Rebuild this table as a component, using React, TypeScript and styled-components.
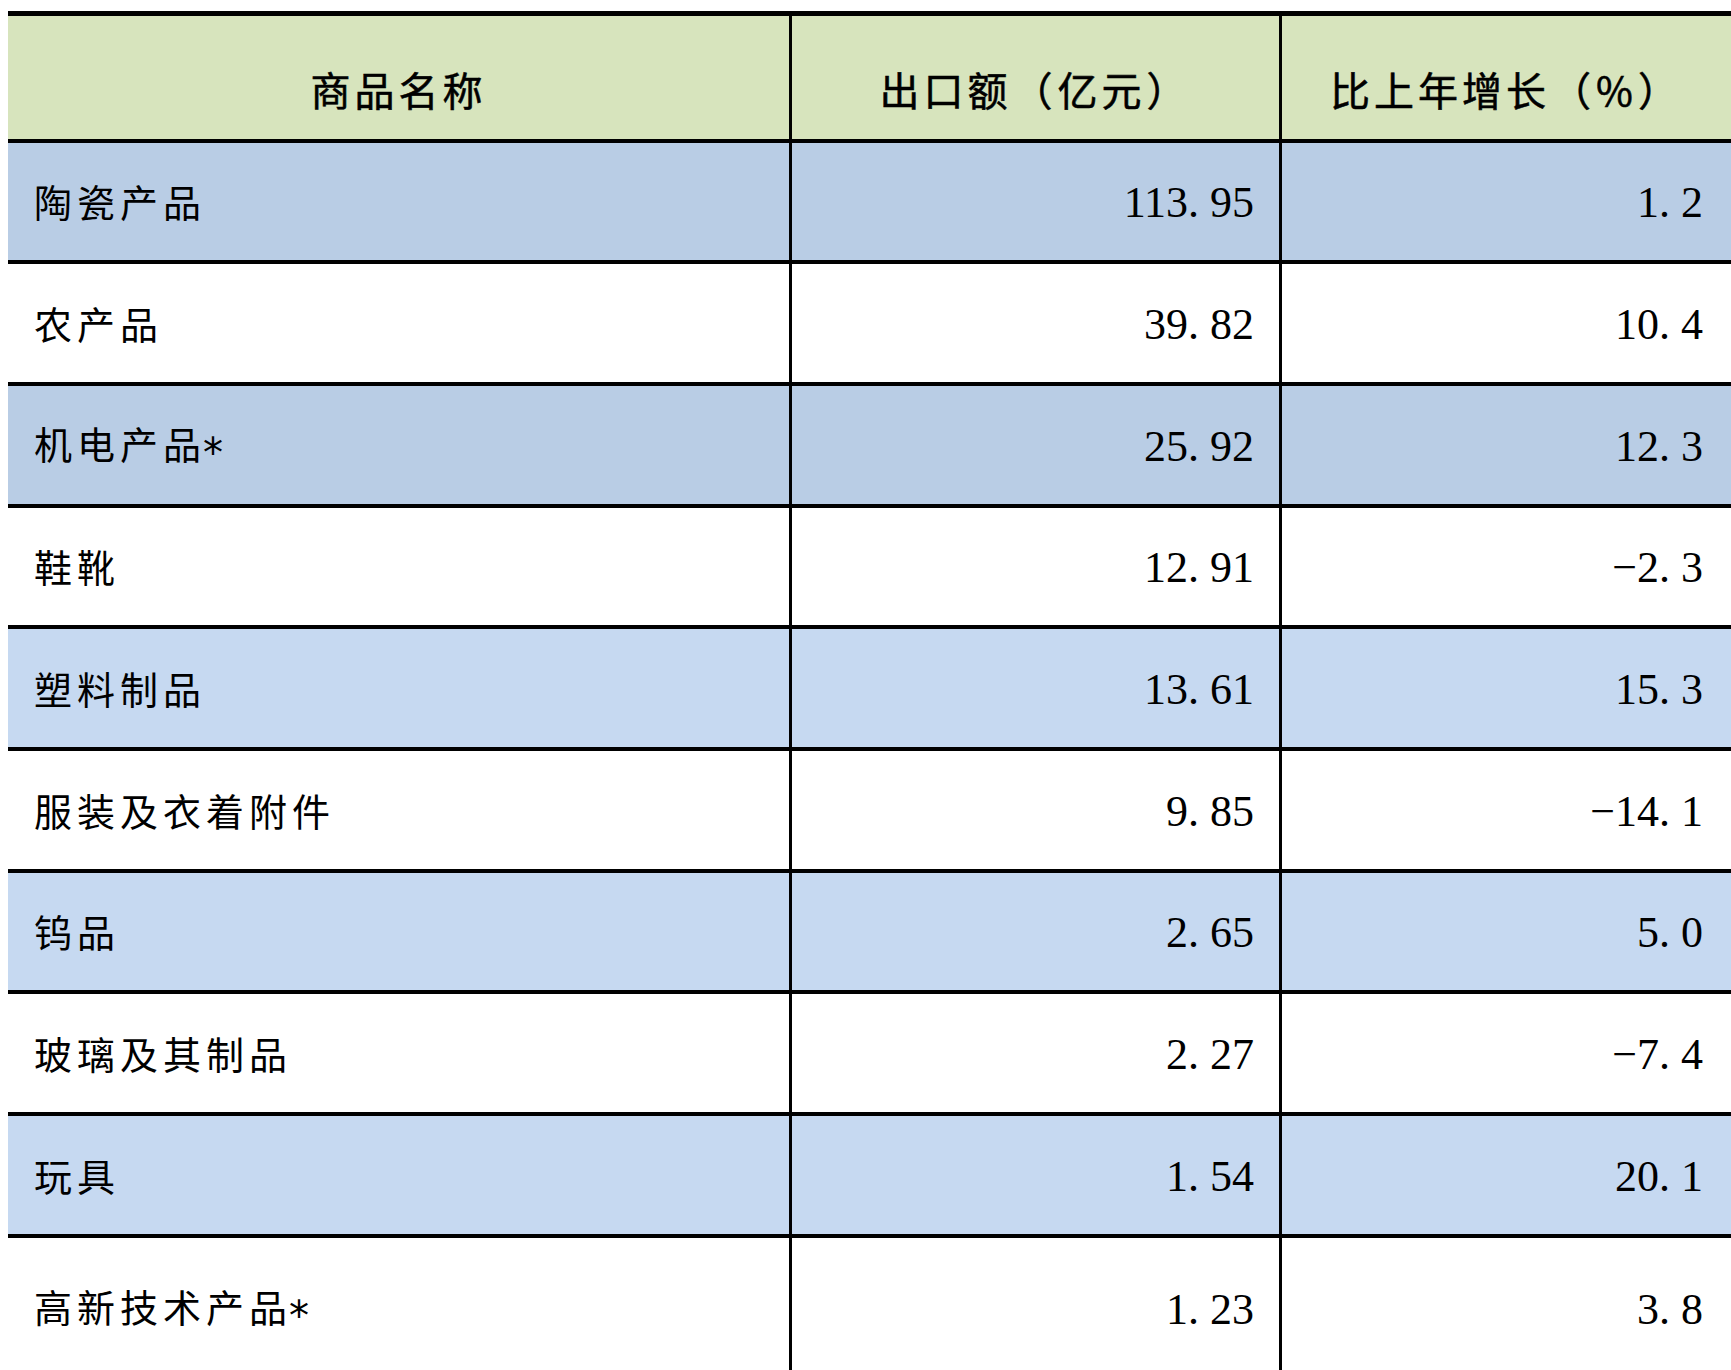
import styled, { createGlobalStyle } from "styled-components";

const GlobalStyle = createGlobalStyle`
  html, body {
    margin: 0;
    padding: 0;
    background: #ffffff;
    overflow: hidden;
  }
`;

const Page = styled.div`
  height: 1370px;
  box-sizing: border-box;
  padding: 11px 0 0 8px;
  overflow: hidden;
`;

const Table = styled.div`
  display: flex;
  flex-direction: column;
  border-top: 5px solid #000;
`;

const Row = styled.div<{ $bg: string; $last?: boolean; $header?: boolean }>`
  display: grid;
  grid-template-columns: 784px 490px 1fr;
  height: ${(p) => (p.$header ? "122.5px" : p.$last ? "140px" : "117.7px")};
  background: ${(p) => p.$bg};
  border-bottom: ${(p) => (p.$last ? "none" : "4px solid #000")};
`;

const Cell = styled.div<{ $align: "left" | "right" | "center"; $pad?: number; $divider?: boolean; $top?: number }>`
  display: flex;
  align-items: center;
  justify-content: ${(p) =>
    p.$align === "left" ? "flex-start" : p.$align === "right" ? "flex-end" : "center"};
  box-sizing: border-box;
  padding-left: ${(p) => (p.$align === "left" ? `${p.$pad ?? 0}px` : "0")};
  padding-right: ${(p) => (p.$align === "right" ? `${p.$pad ?? 0}px` : "0")};
  padding-top: ${(p) => p.$top ?? 0}px;
  border-right: ${(p) => (p.$divider ? "3px solid #000" : "none")};
  min-width: 0;
`;

const HeadText = styled.span`
  font-family: "Noto Sans CJK SC", "Noto Sans", sans-serif;
  font-size: 40px;
  font-weight: 400;
  -webkit-text-stroke: 0.55px #000;
  letter-spacing: 4px;
  text-spacing-trim: space-all;
  color: #000;
  line-height: 1;
`;

const Paren = styled.span`
  margin: 0 1px;
`;

const NameText = styled.span`
  font-family: "Noto Sans CJK SC", "Noto Sans", sans-serif;
  font-size: 38px;
  font-weight: 400;
  letter-spacing: 5px;
  color: #000;
  line-height: 1;
`;

const Star = styled.span`
  font-family: "DejaVu Sans", sans-serif;
  font-size: 40px;
  position: relative;
  top: 8px;
  margin-left: -3px;
`;

const NumText = styled.span`
  font-family: "Liberation Serif", "Times New Roman", serif;
  font-size: 44px;
  color: #000;
  line-height: 1;
`;

const Dot = styled.span`
  margin-right: 0.25em;
`;

type Item = { name: string; amount: string; growth: string; bg: string };

const DARK = "#b9cde5";
const LIGHT = "#c6d9f1";
const WHITE = "#ffffff";

const items: Item[] = [
  { name: "陶瓷产品", amount: "113.95", growth: "1.2", bg: DARK },
  { name: "农产品", amount: "39.82", growth: "10.4", bg: WHITE },
  { name: "机电产品*", amount: "25.92", growth: "12.3", bg: DARK },
  { name: "鞋靴", amount: "12.91", growth: "−2.3", bg: WHITE },
  { name: "塑料制品", amount: "13.61", growth: "15.3", bg: LIGHT },
  { name: "服装及衣着附件", amount: "9.85", growth: "−14.1", bg: WHITE },
  { name: "钨品", amount: "2.65", growth: "5.0", bg: LIGHT },
  { name: "玻璃及其制品", amount: "2.27", growth: "−7.4", bg: WHITE },
  { name: "玩具", amount: "1.54", growth: "20.1", bg: LIGHT },
  { name: "高新技术产品*", amount: "1.23", growth: "3.8", bg: WHITE },
];

function Name({ value }: { value: string }) {
  const starred = value.endsWith("*");
  return (
    <NameText>
      {starred ? value.slice(0, -1) : value}
      {starred && <Star>*</Star>}
    </NameText>
  );
}

function Num({ value }: { value: string }) {
  const [whole, frac] = value.split(".");
  return (
    <NumText>
      {whole}
      <Dot>.</Dot>
      {frac}
    </NumText>
  );
}

function Head({ label, unit }: { label: string; unit?: string }) {
  return (
    <HeadText>
      {label}
      {unit && (
        <>
          <Paren>（</Paren>
          {unit}
          <Paren>）</Paren>
        </>
      )}
    </HeadText>
  );
}

export default function App() {
  return (
    <>
      <GlobalStyle />
      <Page>
        <Table>
          <Row $bg="#d7e4bd" $header>
            <Cell $align="center" $divider $top={24}>
              <Head label="商品名称" />
            </Cell>
            <Cell $align="center" $divider $top={24}>
              <Head label="出口额" unit="亿元" />
            </Cell>
            <Cell $align="center" $top={24}>
              <Head label="比上年增长" unit="%" />
            </Cell>
          </Row>
          {items.map((it, i) => {
            const last = i === items.length - 1;
            return (
              <Row key={it.name} $bg={it.bg} $last={last}>
                <Cell $align="left" $pad={26} $divider>
                  <Name value={it.name} />
                </Cell>
                <Cell $align="right" $pad={25} $divider $top={4}>
                  <Num value={it.amount} />
                </Cell>
                <Cell $align="right" $pad={28} $top={4}>
                  <Num value={it.growth} />
                </Cell>
              </Row>
            );
          })}
        </Table>
      </Page>
    </>
  );
}
